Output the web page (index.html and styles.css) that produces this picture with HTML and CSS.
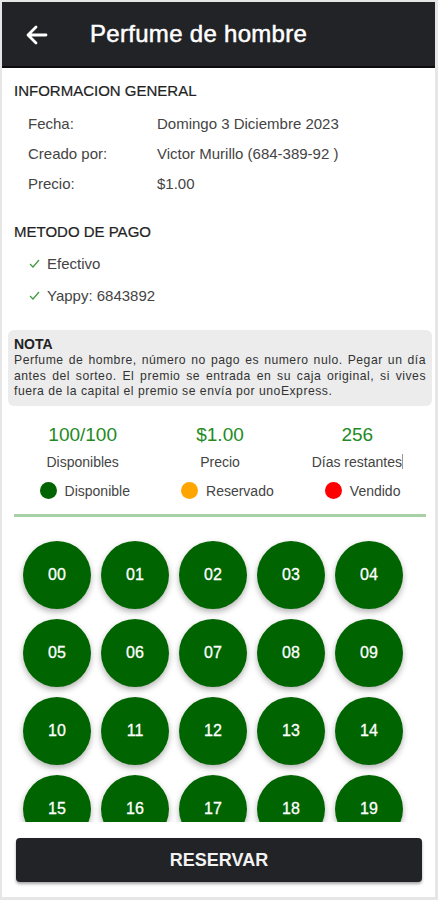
FILE: index.html
```html
<!DOCTYPE html>
<html lang="es">
<head>
    <meta charset="UTF-8">
    <meta name="viewport" content="width=device-width, initial-scale=1.0">
    <title>Perfume de hombre</title>
    <link rel="stylesheet" href="styles.css">
</head>
<body>
    <div class="app">
        <header class="topbar">
            <svg class="back" width="22" height="20" viewBox="0 0 22 20">
                <path d="M20 10H3M10 2L2 10l8 8" fill="none" stroke="#fff" stroke-width="2.8" stroke-linecap="round" stroke-linejoin="round"/>
            </svg>
            <h1>Perfume de hombre</h1>
        </header>

        <div class="content">
            <h2>INFORMACION GENERAL</h2>
            <div class="info-row"><span class="label">Fecha:</span><span>Domingo 3 Diciembre 2023</span></div>
            <div class="info-row"><span class="label">Creado por:</span><span>Victor Murillo (684-389-92 )</span></div>
            <div class="info-row"><span class="label">Precio:</span><span>$1.00</span></div>

            <h2 class="pago">METODO DE PAGO</h2>
            <div class="check-row">
                <svg width="11" height="9" viewBox="0 0 11 9"><path d="M1 5l3 3 6-7" fill="none" stroke="#3c9a3c" stroke-width="1.2"/></svg>
                Efectivo
            </div>
            <div class="check-row">
                <svg width="11" height="9" viewBox="0 0 11 9"><path d="M1 5l3 3 6-7" fill="none" stroke="#3c9a3c" stroke-width="1.2"/></svg>
                Yappy: 6843892
            </div>

            <div class="nota">
                <h3>NOTA</h3>
                <p>Perfume de hombre, número no pago es numero nulo. Pegar un día antes del sorteo. El premio se entrada en su caja original, si vives fuera de la capital el premio se envía por unoExpress.</p>
            </div>

            <div class="stats">
                <div class="stat"><div class="value">100/100</div><div class="name">Disponibles</div></div>
                <div class="stat"><div class="value">$1.00</div><div class="name">Precio</div></div>
                <div class="stat"><div class="value">256</div><div class="name">Días restantes<span class="caret"></span></div></div>
            </div>

            <div class="legend">
                <div class="legend-item"><span class="dot green"></span>Disponible</div>
                <div class="legend-item"><span class="dot orange"></span>Reservado</div>
                <div class="legend-item"><span class="dot red"></span>Vendido</div>
            </div>

            <div class="divider"></div>

            <div class="numbers" id="numbers"></div>
        </div>

        <div class="footer">
            <button class="btn">RESERVAR</button>
        </div>
    </div>

    <script>
        var grid = document.getElementById('numbers');
        for (var i = 0; i < 25; i++) {
            var n = document.createElement('div');
            n.className = 'num';
            n.textContent = (i < 10 ? '0' : '') + i;
            grid.appendChild(n);
        }
    </script>
</body>
</html>
```

FILE: styles.css
```css
body {
    margin: 0;
    padding: 0;
    background-color: #e6e6e6;
    font-family: "Liberation Sans", Arial, sans-serif;
    color: #333;
}
.app {
    margin: 2px 3px 0 2px;
    height: 895px;
    background-color: #fff;
    display: flex;
    flex-direction: column;
}
.topbar {
    height: 64px;
    background-color: #222326;
    border-bottom: 2px solid #0c0c0c;
    display: flex;
    align-items: center;
    flex-shrink: 0;
}
.back {
    margin-left: 24px;
    margin-top: 2px;
}
.topbar h1 {
    margin: 0 0 0 42px;
    color: #fff;
    font-size: 24px;
    font-weight: normal;
    letter-spacing: 0.3px;
    -webkit-text-stroke: 0.5px #fff;
}
.content {
    flex: 1;
    overflow: hidden;
    padding-top: 13px;
}
h2 {
    margin: 0 0 0 12px;
    font-size: 15px;
    line-height: 20px;
    font-weight: normal;
    color: #222;
    -webkit-text-stroke: 0.2px #222;
}
h2.pago {
    margin-top: 24px;
}
.info-row {
    display: flex;
    height: 30px;
    align-items: center;
    padding-left: 26px;
    font-size: 15px;
    color: #444;
}
.info-row .label {
    width: 129px;
}
h2 + .info-row {
    margin-top: 7px;
}
.pago + .check-row {
    margin-top: 5px;
}
.check-row {
    display: flex;
    align-items: center;
    height: 32px;
    padding-left: 27px;
    font-size: 15px;
    color: #444;
}
.check-row svg {
    margin-right: 7px;
}
.nota {
    margin: 19px 3px 0 6px;
    padding: 6px;
    background-color: #ececec;
    border-radius: 6px;
}
.nota h3 {
    margin: 0;
    font-size: 14px;
    line-height: 17px;
    color: #222;
}
.nota p {
    margin: 0;
    font-size: 12.2px;
    line-height: 15.5px;
    letter-spacing: 0.5px;
    text-align: justify;
    color: #333;
}
.stats {
    display: flex;
    margin: 17px 9px 0 12px;
}
.stat {
    flex: 1;
    text-align: center;
}
.value {
    font-size: 19px;
    line-height: 24px;
    color: #238a23;
}
.name {
    margin-top: 6px;
    font-size: 14px;
    line-height: 18px;
    color: #444;
}
.caret {
    display: inline-block;
    width: 1px;
    height: 15px;
    background-color: #999;
    vertical-align: -2px;
}
.legend {
    display: flex;
    justify-content: space-around;
    margin: 10px 9px 0 12px;
    font-size: 14px;
    line-height: 20px;
    color: #444;
}
.legend-item {
    display: flex;
    align-items: center;
}
.dot {
    width: 17px;
    height: 17px;
    border-radius: 50%;
    margin-right: 8px;
}
.green { background-color: #006400; }
.orange { background-color: #ffa500; }
.red { background-color: #ff0000; }
.divider {
    height: 3px;
    margin: 13px 9px 0 12px;
    background-color: #a7d1a4;
}
.numbers {
    display: grid;
    grid-template-columns: repeat(5, 68px);
    gap: 10px;
    padding: 24px 0 10px 21px;
}
.num {
    width: 68px;
    height: 68px;
    border-radius: 50%;
    background-color: #006400;
    color: #fff;
    font-size: 16px;
    -webkit-text-stroke: 0.3px #fff;
    display: flex;
    align-items: center;
    justify-content: center;
    box-shadow: 0 3px 6px rgba(0, 0, 0, 0.3);
}
.footer {
    flex-shrink: 0;
    height: 75px;
    padding: 16px 13px 0 14px;
    box-sizing: border-box;
}
.btn {
    width: 100%;
    height: 44px;
    background-color: #222326;
    color: #f2f2f2;
    border: none;
    border-radius: 4px;
    font-family: "Liberation Sans", Arial, sans-serif;
    font-size: 18px;
    font-weight: bold;
    box-shadow: 0 2px 3px rgba(0, 0, 0, 0.35);
    cursor: pointer;
}
```
